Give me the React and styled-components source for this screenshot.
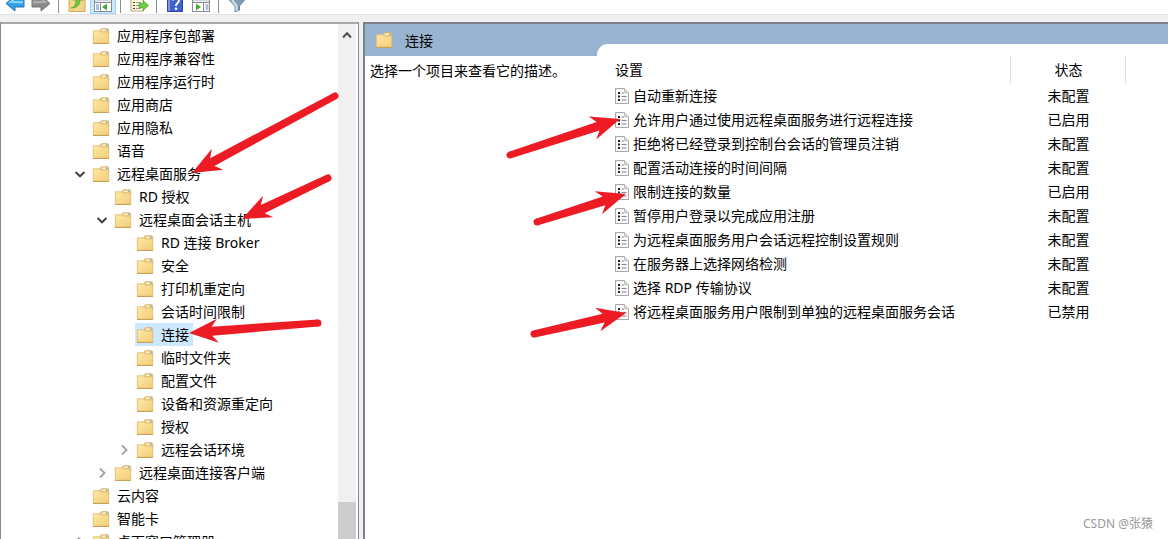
import styled, { createGlobalStyle } from "styled-components";

const TREE = [
  { label: "应用程序包部署", level: 0 },
  { label: "应用程序兼容性", level: 0 },
  { label: "应用程序运行时", level: 0 },
  { label: "应用商店", level: 0 },
  { label: "应用隐私", level: 0 },
  { label: "语音", level: 0 },
  { label: "远程桌面服务", level: 0, state: "open" },
  { label: "RD 授权", level: 1 },
  { label: "远程桌面会话主机", level: 1, state: "open" },
  { label: "RD 连接 Broker", level: 2 },
  { label: "安全", level: 2 },
  { label: "打印机重定向", level: 2 },
  { label: "会话时间限制", level: 2 },
  { label: "连接", level: 2, selected: true },
  { label: "临时文件夹", level: 2 },
  { label: "配置文件", level: 2 },
  { label: "设备和资源重定向", level: 2 },
  { label: "授权", level: 2 },
  { label: "远程会话环境", level: 2, state: "closed" },
  { label: "远程桌面连接客户端", level: 1, state: "closed" },
  { label: "云内容", level: 0 },
  { label: "智能卡", level: 0 },
  { label: "桌面窗口管理器", level: 0, state: "closed" },
];

const SETTINGS = [
  ["自动重新连接", "未配置"],
  ["允许用户通过使用远程桌面服务进行远程连接", "已启用"],
  ["拒绝将已经登录到控制台会话的管理员注销", "未配置"],
  ["配置活动连接的时间间隔", "未配置"],
  ["限制连接的数量", "已启用"],
  ["暂停用户登录以完成应用注册", "未配置"],
  ["为远程桌面服务用户会话远程控制设置规则", "未配置"],
  ["在服务器上选择网络检测", "未配置"],
  ["选择 RDP 传输协议", "未配置"],
  ["将远程桌面服务用户限制到单独的远程桌面服务会话", "已禁用"],
];

// tail x/y, tip x/y
const ARROWS = [
  [335, 96, 192, 173],
  [328, 178, 242, 219],
  [318, 323, 189, 333],
  [510, 155, 620, 119],
  [537, 222, 626, 194],
  [534, 334, 626, 313],
];

function FolderIcon() {
  return (
    <svg width="18" height="18" viewBox="0 0 18 18" aria-hidden="true">
      <defs>
        <linearGradient id="folder" x1="0" y1="0" x2="1" y2="1">
          <stop offset="0" stopColor="#ffe8a6" />
          <stop offset="1" stopColor="#f2cd78" />
        </linearGradient>
      </defs>
      <path d="M8 6V3l1.500-1.300H16l.7 1V7H8z" fill="#efd28a" stroke="#d2ae66" strokeWidth=".8" />
      <path d="M10.500 3.300h3.300" stroke="#fffbe8" strokeWidth="1.200" />
      <path d="M13.800 3.300h1.800" stroke="#6aaee0" strokeWidth="1.200" />
      <path d="M1.300 3.800h6.500l1.200 1.200h7.700v11.200H1.300z" fill="url(#folder)" stroke="#dcb96c" strokeWidth=".8" />
      <path d="M1 16.500h16" stroke="#c8a055" />
    </svg>
  );
}

function PolicyIcon() {
  return (
    <svg width="16" height="18" viewBox="0 0 16 18" aria-hidden="true">
      <path d="M1.500 1.500h9l4 4v11h-13z" fill="#fafafa" stroke="#a8a8a8" />
      <path d="M10.500 1.500v4h4" fill="#e2e2e2" stroke="#bdbdbd" />
      <path d="M4 6h2M4 9.500h2M4 13h2" stroke="#222" strokeWidth="2" />
      <path d="M7.500 6H10M7.500 9.500h5M7.500 13h5" stroke="#8585a0" />
    </svg>
  );
}

function Chevron({ state }) {
  if (state === "open") {
    return (
      <svg width="12" height="12" viewBox="0 0 12 12" aria-hidden="true">
        <path d="M1.500 4L6 8.300 10.500 4" fill="none" stroke="#444" strokeWidth="2" />
      </svg>
    );
  }
  return (
    <svg width="12" height="12" viewBox="0 0 12 12" aria-hidden="true">
      <path d="M4 1.500L8.500 6 4 10.500" fill="none" stroke="#a6a6a6" strokeWidth="2" />
    </svg>
  );
}

function BackIcon() {
  return (
    <svg width="20" height="18" viewBox="0 0 20 18" aria-hidden="true">
      <path d="M1 9.500L10 1.500v4h9v7.500h-9v4z" fill="#2f9fe6" stroke="#2b76ae" />
      <path d="M3 9l6-5v3h9v2.500z" fill="#86d2f7" />
    </svg>
  );
}

function ForwardIcon() {
  return (
    <svg width="20" height="18" viewBox="0 0 20 18" aria-hidden="true">
      <path d="M19 9.500L10 1.500v4H1v7.500h9v4z" fill="#8a8a8a" stroke="#777" />
      <path d="M17 9l-6-5v3H2v2.500z" fill="#adadad" />
    </svg>
  );
}

function UpIcon() {
  return (
    <svg width="18" height="18" viewBox="0 0 18 18" aria-hidden="true">
      <path d="M1 4h7l2 2h7v11.500H1z" fill="#f2d58a" stroke="#cfa95a" />
      <path d="M3 14c4-1 5-4 5-8H5l5-5 5 5h-3c0 5-3 8-9 8z" fill="#6cc832" stroke="#459a22" strokeWidth=".6" />
    </svg>
  );
}

function PaneIcon({ flip }) {
  return (
    <svg width="18" height="18" viewBox="0 0 18 18" aria-hidden="true">
      <rect x=".5" y="2.500" width="17" height="15" fill="#fff" stroke="#878d96" />
      <path d="M1 6h16" stroke="#d3d8df" strokeWidth="3" />
      <path d="M1 8.500h16" stroke="#878d96" />
      <path d={flip ? "M11.500 9v8" : "M6.500 9v8"} stroke="#878d96" />
      <path
        d={flip ? "M13.500 11h3M13.500 13h3M13.500 15h3" : "M2 11h3M2 13h3M2 15h3"}
        stroke="#5f7fb5"
      />
      <path d={flip ? "M4 9.500l5 3.500-5 3.500z" : "M13 9.500L8 13l5 3.500z"} fill="#3fae2a" />
    </svg>
  );
}

function ExportIcon() {
  return (
    <svg width="19" height="18" viewBox="0 0 19 18" aria-hidden="true">
      <path d="M1 1h12.500v16H1z" fill="#fff6d2" stroke="#b5aa86" />
      <path d="M3 8.500h2M3 11.500h2M3 14.500h2" stroke="#444" />
      <path d="M6 8.500h5M6 11.500h5M6 14.500h5" stroke="#9a92b8" />
      <path d="M9 9.500h4V6.500l5.500 5-5.500 5v-3H9z" fill="#6fce3f" stroke="#48a32c" strokeWidth=".7" />
    </svg>
  );
}

function HelpIcon() {
  return (
    <svg width="16" height="18" viewBox="0 0 16 18" aria-hidden="true">
      <path d="M.5 0h15v17.500H.5z" fill="#3f62cf" stroke="#2c469c" />
      <path d="M2 0v17" stroke="#8199dc" strokeWidth="2" />
      <path d="M6 6.500c0-3.500 6-3.500 6 0 0 2.500-3 2.500-3 5.500" fill="none" stroke="#fff" strokeWidth="2" />
      <circle cx="9" cy="14.700" r="1.300" fill="#fff" />
    </svg>
  );
}

function FilterIcon() {
  return (
    <svg width="18" height="18" viewBox="0 0 18 18" aria-hidden="true">
      <path d="M.5 5h17l-6 7v4L7 18v-6z" fill="#7f9db0" stroke="#6b8799" />
      <path d="M4 6l4.500 5.500V17" fill="none" stroke="#d3e2ec" strokeWidth="2" />
    </svg>
  );
}

function Arrow({ points }) {
  const [x1, y1, x2, y2] = points;
  const length = Math.hypot(x2 - x1, y2 - y1);
  const angle = (Math.atan2(y2 - y1, x2 - x1) * 180) / Math.PI;
  // the shaft widens a little towards the head
  return (
    <g transform={`translate(${x2} ${y2}) rotate(${angle})`} fill="#ed1c24">
      <circle cx={-length} r="3.500" />
      <path d={`M${-length} -3.500L-23 -4.500L-29 -12L0 0L-29 12L-23 4.500L${-length} 3.500z`} />
    </g>
  );
}

function App() {
  return (
    <Window>
      <GlobalStyle />
      <Toolbar role="toolbar" aria-label="工具栏">
        <Tool aria-label="后退"><BackIcon /></Tool>
        <Tool aria-label="前进"><ForwardIcon /></Tool>
        <Separator />
        <Tool aria-label="向上一级"><UpIcon /></Tool>
        <Tool aria-label="显示/隐藏控制台树" $active><PaneIcon /></Tool>
        <Separator />
        <Tool aria-label="导出列表"><ExportIcon /></Tool>
        <Separator />
        <Tool aria-label="帮助"><HelpIcon /></Tool>
        <Tool aria-label="显示/隐藏操作窗格"><PaneIcon flip /></Tool>
        <Separator />
        <Tool aria-label="筛选器"><FilterIcon /></Tool>
      </Toolbar>
      <Panes>
        <TreePane>
          <Tree>
            {TREE.map((item) => (
              <TreeRow key={item.label} $level={item.level}>
                <Toggle>{item.state && <Chevron state={item.state} />}</Toggle>
                <TreeItem $selected={item.selected}>
                  <FolderIcon />
                  {item.label}
                </TreeItem>
              </TreeRow>
            ))}
          </Tree>
          <Scrollbar>
            <ScrollButton aria-label="向上滚动">
              <svg width="10" height="8" viewBox="0 0 10 8" aria-hidden="true">
                <path d="M1 6.500L5 2.300l4 4.200" fill="none" stroke="#505050" strokeWidth="2" />
              </svg>
            </ScrollButton>
            <Thumb />
          </Scrollbar>
        </TreePane>
        <DetailPane>
          <Summary>
            <Title>
              <FolderIcon />
              连接
            </Title>
            <Description>选择一个项目来查看它的描述。</Description>
          </Summary>
          <List>
            <Table>
              <thead>
                <tr>
                  <HeadCell scope="col">设置</HeadCell>
                  <HeadCell scope="col" $status>状态</HeadCell>
                  <HeadCell $rest />
                </tr>
              </thead>
              <tbody>
                {SETTINGS.map(([name, status]) => (
                  <tr key={name}>
                    <Cell>
                      <Setting>
                        <PolicyIcon />
                        {name}
                      </Setting>
                    </Cell>
                    <Cell $status>{status}</Cell>
                    <Cell />
                  </tr>
                ))}
              </tbody>
            </Table>
            <Watermark>CSDN @张猿</Watermark>
          </List>
        </DetailPane>
      </Panes>
      <Annotations aria-hidden="true">
        {ARROWS.map((points) => (
          <Arrow key={points.join()} points={points} />
        ))}
      </Annotations>
    </Window>
  );
}

const GlobalStyle = createGlobalStyle`
* {
  box-sizing: border-box;
}
body {
  margin: 0;
  overflow: hidden;
  color: #000;
  font-family: "Noto Sans", "Noto Sans CJK SC", sans-serif;
  font-size: 14px;
}
button {
  border: 0;
  padding: 0;
  background: none;
  color: inherit;
  font: inherit;
}
svg {
  display: block;
  flex: none;
}
`;

const Window = styled.div`
position: relative;
display: flex;
flex-direction: column;
height: 100vh;
background: #f0f0f0;
overflow: hidden;
`;

const Toolbar = styled.div`
display: flex;
align-items: flex-end;
flex: none;
height: 15px;
padding-left: 2px;
background: #fff;
border-bottom: 1px solid #e3e3e3;
overflow: hidden;
`;

const Tool = styled.button`
display: flex;
justify-content: center;
align-items: flex-end;
flex: none;
width: 26px;
height: 24px;
padding-bottom: 1px;
background: ${(p) => (p.$active ? "#cce8ff" : "none")};
border: 1px solid ${(p) => (p.$active ? "#99d1ff" : "transparent")};
`;

const Separator = styled.span`
flex: none;
width: 1px;
height: 24px;
margin: 0 5px 1px 4px;
background: #8e8e8e;
`;

const Panes = styled.div`
display: flex;
flex: 1;
min-height: 0;
gap: 4px;
padding-top: 7px;
`;

const TreePane = styled.nav`
display: flex;
flex: none;
width: 359px;
background: #fff;
border: solid #828790;
border-width: 2px 1px 0;
border-top-color: #a5a7ab;
overflow: hidden;
`;

const Tree = styled.ul`
flex: 1;
margin: 0;
padding: 0;
list-style: none;
`;

const TreeRow = styled.li`
display: flex;
align-items: center;
height: 23px;
padding-left: ${(p) => 73 + p.$level * 22}px;
`;

const Toggle = styled.span`
flex: none;
width: 17px;
`;

const TreeItem = styled.button`
display: flex;
align-items: center;
gap: 7px;
height: 23px;
padding: 0 4px 0 1px;
line-height: 22px;
white-space: nowrap;
background: ${(p) => (p.$selected ? "#cce8ff" : "none")};
`;

const Scrollbar = styled.div`
display: flex;
flex-direction: column;
justify-content: space-between;
flex: none;
width: 18px;
margin-right: 2px;
background: #f0f0f0;
`;

const ScrollButton = styled.button`
display: flex;
justify-content: center;
align-items: center;
height: 22px;
`;

const Thumb = styled.div`
height: 37px;
background: #cdcdcd;
`;

const DetailPane = styled.main`
display: grid;
grid-template-columns: 232px 1fr;
flex: 1;
min-width: 0;
background: #99b4d1;
border: solid #7b7f87;
border-width: 2px 0 0 2px;
`;

const Summary = styled.section`
display: flex;
flex-direction: column;
`;

const Title = styled.h1`
display: flex;
align-items: center;
gap: 12px;
height: 32px;
margin: 0;
padding-left: 10px;
font-size: 14px;
font-weight: 400;
`;

const Description = styled.p`
flex: 1;
margin: 0;
padding: 4px 0 0 5px;
line-height: 22px;
white-space: nowrap;
background: #fff;
`;

const List = styled.section`
display: flex;
flex-direction: column;
justify-content: space-between;
margin-top: 20px;
padding-top: 12px;
background: #fff;
border-top-left-radius: 11px;
`;

const Table = styled.table`
width: 100%;
table-layout: fixed;
border-collapse: collapse;
`;

const HeadCell = styled.th`
width: ${(p) => (p.$status ? "115px" : p.$rest ? "43px" : "auto")};
height: 28px;
padding: ${(p) => (p.$status ? "0 0 3px 2px" : "0 0 3px 18px")};
border-right: ${(p) => (p.$rest ? "0" : "1px solid #e2e2e2")};
text-align: ${(p) => (p.$status ? "center" : "left")};
font-weight: 400;
`;

const Cell = styled.td`
height: 24px;
padding: ${(p) => (p.$status ? "0 0 0 2px" : "0 0 0 17px")};
text-align: ${(p) => (p.$status ? "center" : "left")};
line-height: 22px;
white-space: nowrap;
`;

const Setting = styled.span`
display: flex;
align-items: center;
gap: 3px;
`;

const Watermark = styled.footer`
padding: 0 15px 7px 0;
color: #999;
font-size: 12px;
line-height: 16px;
text-align: right;
`;

const Annotations = styled.svg`
position: absolute;
top: 0;
left: 0;
width: 100%;
height: 100%;
pointer-events: none;
`;

export default App;
